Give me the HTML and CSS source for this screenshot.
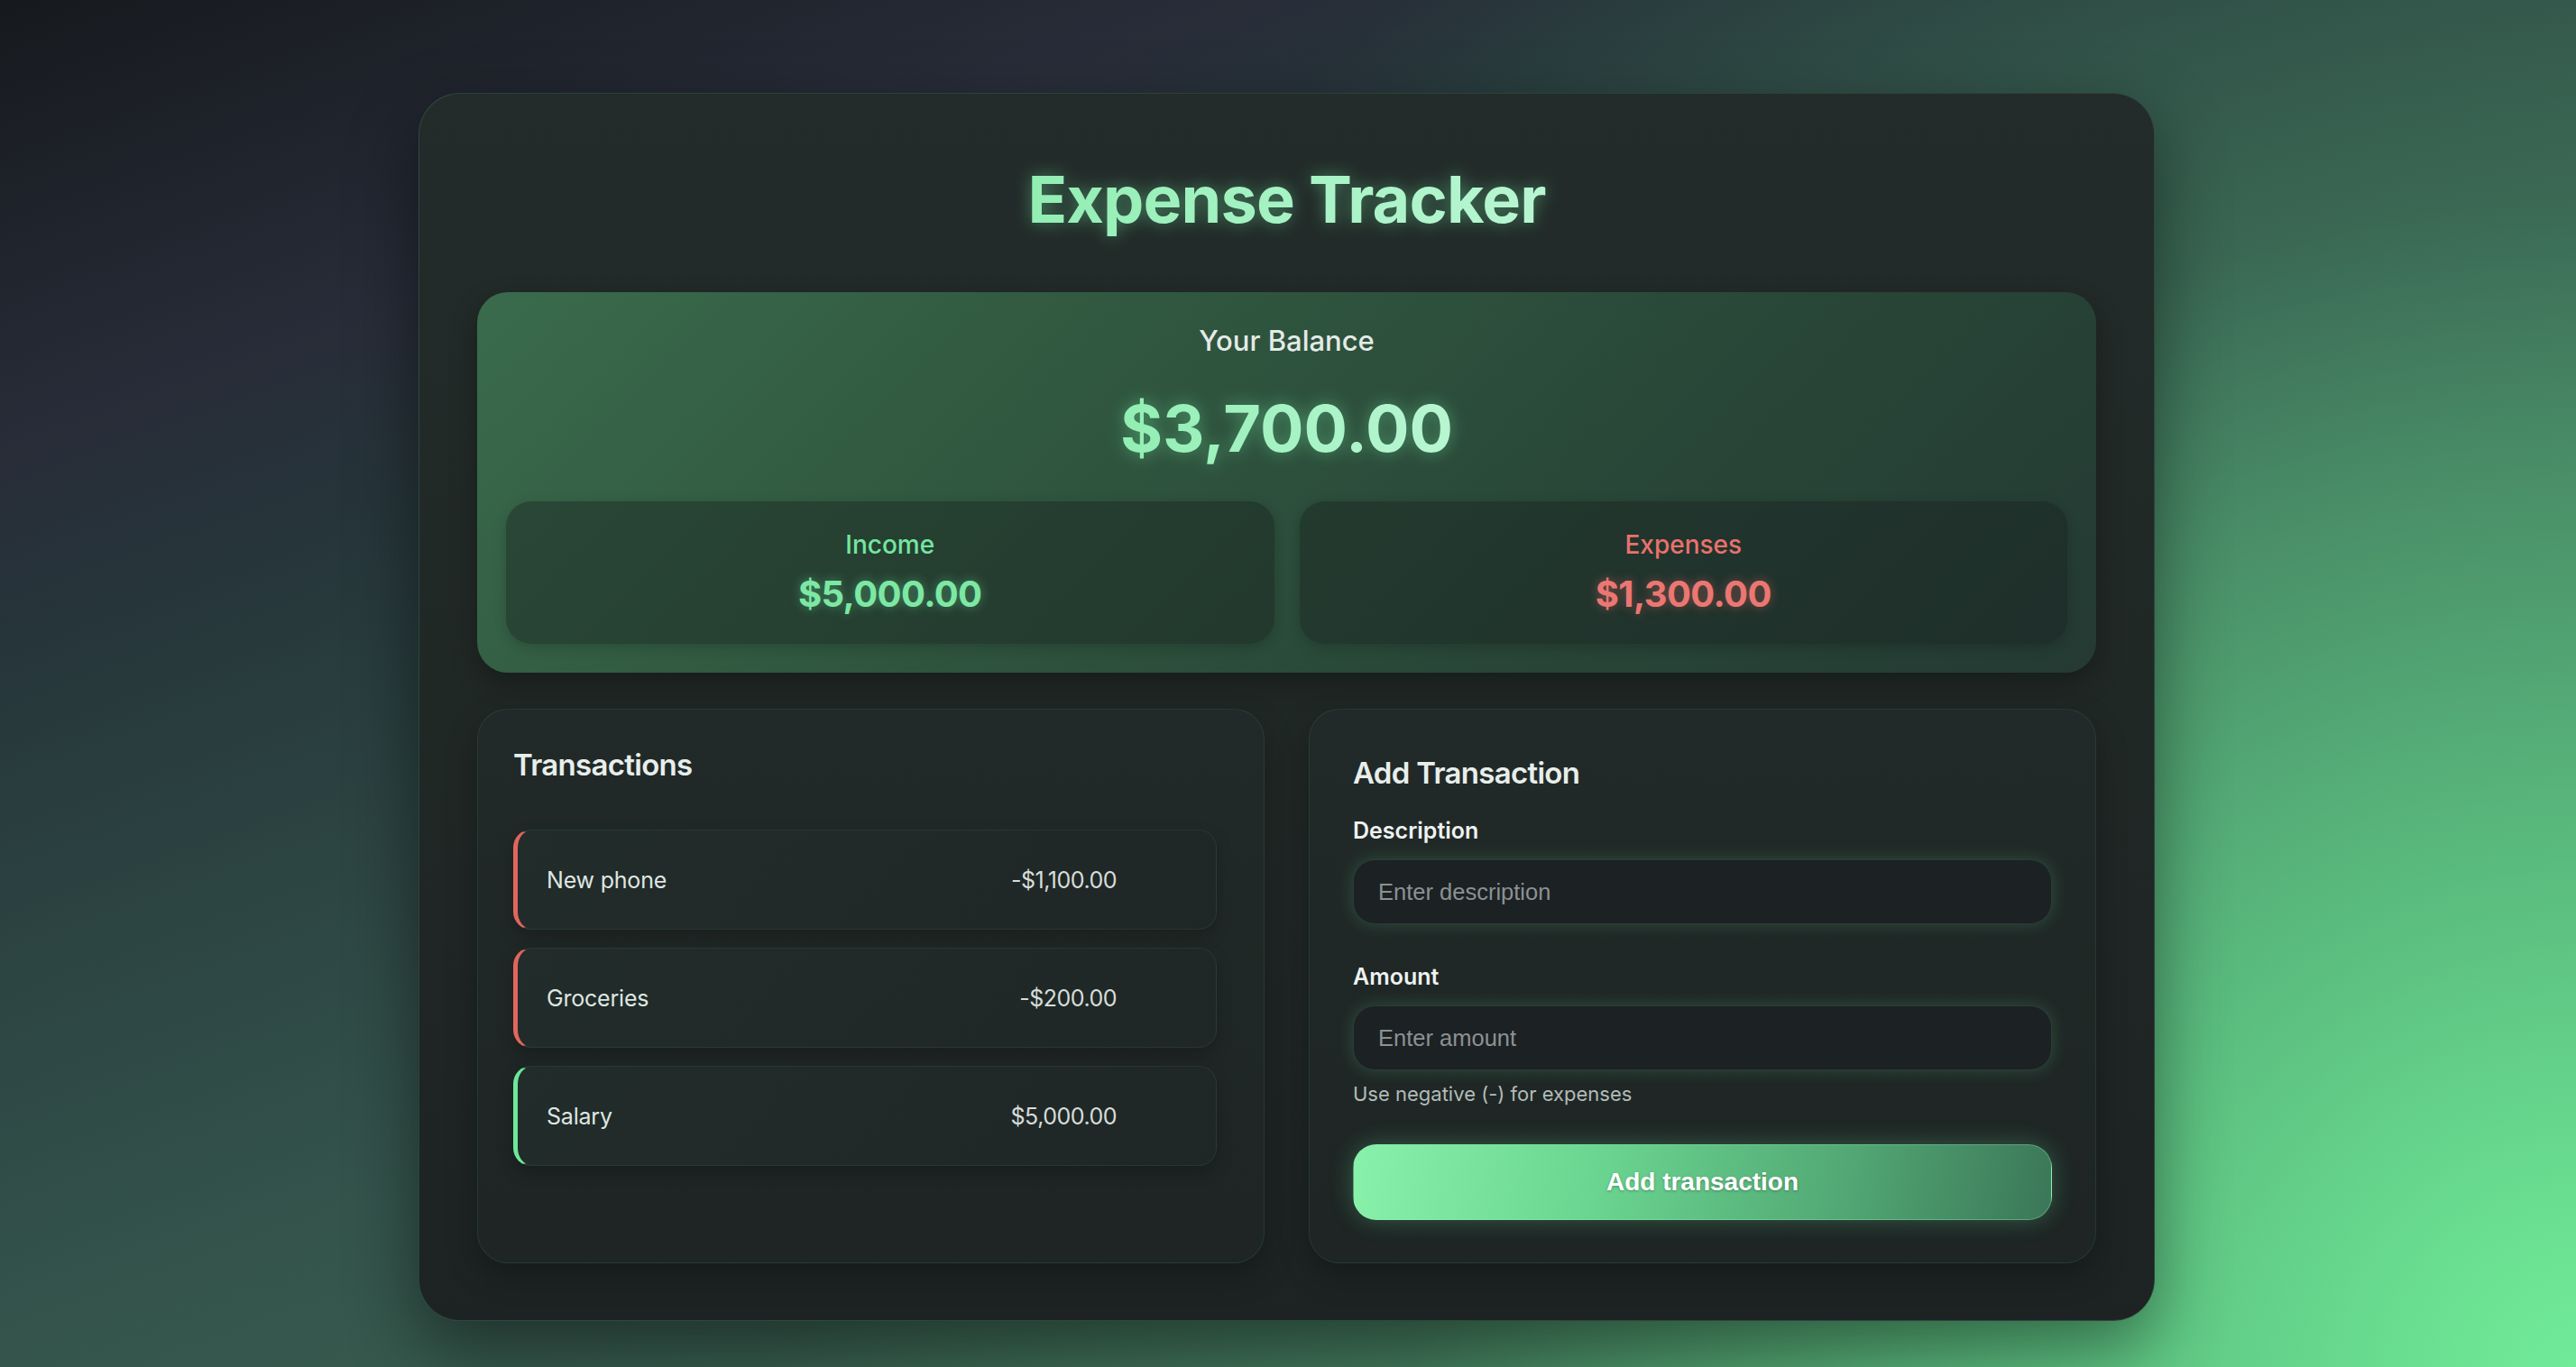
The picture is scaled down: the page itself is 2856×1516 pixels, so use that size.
FILE: index.html
```html
<!DOCTYPE html>
<html lang="en">
<head>
<meta charset="utf-8">
<title>Expense Tracker</title>
<link rel="stylesheet" href="styles.css">
</head>
<body>
<main class="app">
  <h1 class="title"><span class="glow-text">Expense Tracker</span></h1>

  <section class="balance">
    <h2 class="balance-label">Your Balance</h2>
    <div class="balance-value"><span class="glow-text">$3,700.00</span></div>
    <div class="summary">
      <div class="summary-box">
        <div class="summary-label income">Income</div>
        <div class="summary-value income">$5,000.00</div>
      </div>
      <div class="summary-box">
        <div class="summary-label expense">Expenses</div>
        <div class="summary-value expense">$1,300.00</div>
      </div>
    </div>
  </section>

  <div class="columns">
    <section class="panel panel-list">
      <h3 class="panel-title">Transactions</h3>
      <ul class="tx-list">
        <li class="tx tx-minus"><span class="tx-name">New phone</span><span class="tx-amount">-$1,100.00</span></li>
        <li class="tx tx-minus"><span class="tx-name">Groceries</span><span class="tx-amount">-$200.00</span></li>
        <li class="tx tx-plus"><span class="tx-name">Salary</span><span class="tx-amount">$5,000.00</span></li>
      </ul>
    </section>

    <section class="panel panel-form">
      <h3 class="panel-title form-title">Add Transaction</h3>
      <form class="form">
        <div class="field">
          <label class="field-label" for="desc">Description</label>
          <input class="field-input" id="desc" type="text" placeholder="Enter description">
        </div>
        <div class="field field-amount">
          <label class="field-label" for="amt">Amount</label>
          <input class="field-input" id="amt" type="text" placeholder="Enter amount">
          <small class="hint">Use negative (-) for expenses</small>
        </div>
        <button class="btn" type="button">Add transaction</button>
      </form>
    </section>
  </div>
</main>
</body>
</html>
```

FILE: styles.css
```css
* { box-sizing: border-box; }

html, body { margin: 0; padding: 0; }

body {
  min-height: 100vh;
  font-family: Inter, "Noto Sans", "DejaVu Sans", sans-serif;
  color: #e2e8e5;
  background:
    radial-gradient(circle at 100% 100%, rgba(112,235,152,1) 0%, rgba(100,215,140,0.75) 18%, rgba(80,160,110,0.35) 40%, rgba(60,110,85,0) 62%),
    linear-gradient(160deg, #16191d 0%, #282c38 19%, #26353a 28%, #2c4442 42%, #34544c 58%, #3a6250 80%, #4a8a64 100%);
  display: flex;
  justify-content: center;
  align-items: flex-start;
  padding-top: 103px;
}

.app {
  width: 1925px;
  margin-right: 3px;
  padding: 64px 64px 63px;
  border-radius: 46px;
  border: 1px solid rgba(110, 231, 160, 0.16);
  background: linear-gradient(180deg, #232c2a 0%, #202826 50%, #1d2323 100%);
  box-shadow: 0 30px 80px rgba(0, 0, 0, 0.45);
}

.title {
  margin: 0 0 60px;
  padding-top: 10px;
  text-align: center;
  font-size: 72px;
  line-height: 1.2;
  font-weight: 700;
  letter-spacing: -0.9px;
}

.glow-text {
  background: linear-gradient(90deg, #92eeb3 0%, #a8f3c6 55%, #b8f6d2 100%);
  -webkit-background-clip: text;
  background-clip: text;
  color: transparent;
  filter: drop-shadow(0 0 9px rgba(110, 231, 160, 0.45));
}

.balance {
  padding: 36px 32px 32px;
  border-radius: 34px;
  background: linear-gradient(135deg, #3a6b4c 0%, #30573f 35%, #284537 70%, #243a33 100%);
  box-shadow: 0 12px 30px rgba(0, 0, 0, 0.3);
  text-align: center;
}

.balance-label {
  margin: 0;
  font-size: 31px;
  line-height: 36px;
  font-weight: 500;
  color: #e4ebe7;
}

.balance-value {
  margin: 36px 0 38px;
  font-size: 72px;
  line-height: 86px;
  font-weight: 700;
}

.summary {
  display: grid;
  grid-template-columns: 1fr 1fr;
  gap: 28px;
}

.summary-box {
  height: 158px;
  padding-top: 31px;
  border-radius: 28px;
  background: rgba(24, 30, 30, 0.42);
  box-shadow: 0 4px 14px rgba(0, 0, 0, 0.18);
}

.summary-label {
  font-size: 28px;
  line-height: 34px;
  font-weight: 500;
  margin-bottom: 14px;
}

.summary-value {
  font-size: 40px;
  line-height: 48px;
  font-weight: 700;
  letter-spacing: -0.6px;
}

.income { color: #74e6a0; }
.summary-value.income { color: #7ce8a4; text-shadow: 0 0 12px rgba(110, 231, 160, 0.45); }
.expense { color: #ea716c; }
.summary-value.expense { color: #ec7672; text-shadow: 0 0 12px rgba(235, 110, 110, 0.45); }

.columns {
  display: grid;
  grid-template-columns: 1fr 1fr;
  gap: 49px;
  margin-top: 40px;
}

.panel {
  height: 615px;
  border-radius: 34px;
  border: 1px solid rgba(110, 231, 160, 0.1);
  background: linear-gradient(180deg, #212a28 0%, #1e2524 100%);
  box-shadow: 0 14px 34px rgba(0, 0, 0, 0.28);
}

.panel-list { padding: 41px 52px 40px 39px; }
.panel-form { padding: 50px 48px 48px; }

.panel-title {
  margin: 0;
  font-size: 33px;
  line-height: 40px;
  font-weight: 600;
  letter-spacing: -0.7px;
  color: #e8eeeb;
}

.tx-list {
  list-style: none;
  margin: 52px 0 0;
  padding: 0;
  display: flex;
  flex-direction: column;
  gap: 20px;
}

.tx {
  display: flex;
  justify-content: space-between;
  align-items: center;
  height: 111px;
  padding: 0 110px 0 32px;
  border-radius: 20px;
  border: 1px solid rgba(110, 231, 160, 0.08);
  border-left: 5px solid;
  background: linear-gradient(135deg, #222c2a 0%, #1f2726 100%);
  box-shadow: 0 8px 18px rgba(0, 0, 0, 0.22);
  font-size: 25px;
  letter-spacing: -0.2px;
  color: #dfe6e2;
}

.tx-minus { border-left-color: #e0665f; }
.tx-plus { border-left-color: #6ee79a; }

.tx-amount { color: #d6ddd9; letter-spacing: -0.5px; }

.form { display: flex; flex-direction: column; }

.form-title { margin-bottom: 29px; }

.field { display: flex; flex-direction: column; }

.field-label {
  font-size: 25px;
  line-height: 30px;
  font-weight: 600;
  color: #eef2f0;
  margin-bottom: 17px;
}

.field-input {
  height: 72px;
  padding: 0 27px;
  border-radius: 24px;
  border: 1px solid rgba(110, 231, 160, 0.14);
  background: #1c2124;
  box-shadow: 0 0 18px rgba(110, 231, 160, 0.2);
  font-family: "Liberation Sans", Arial, sans-serif;
  font-size: 25.5px;
  color: #e6ebe8;
  outline: none;
}

.field-input::placeholder { color: #8b9291; }

.field-amount { margin-top: 43px; }

.hint {
  margin-top: 13px;
  font-size: 22px;
  line-height: 26px;
  color: #b3bbb7;
}

.btn {
  margin-top: 43px;
  height: 84px;
  border-radius: 26px;
  border: 1px solid rgba(140, 240, 180, 0.35);
  background: linear-gradient(100deg, #88f2ab 0%, #6ad590 35%, #52a874 70%, #3b7658 100%);
  box-shadow: 0 0 26px rgba(110, 231, 160, 0.28);
  font-family: "Liberation Sans", Arial, sans-serif;
  font-size: 28px;
  font-weight: 700;
  color: #ffffff;
  text-shadow: 0 1px 3px rgba(0, 0, 0, 0.3);
}
```
